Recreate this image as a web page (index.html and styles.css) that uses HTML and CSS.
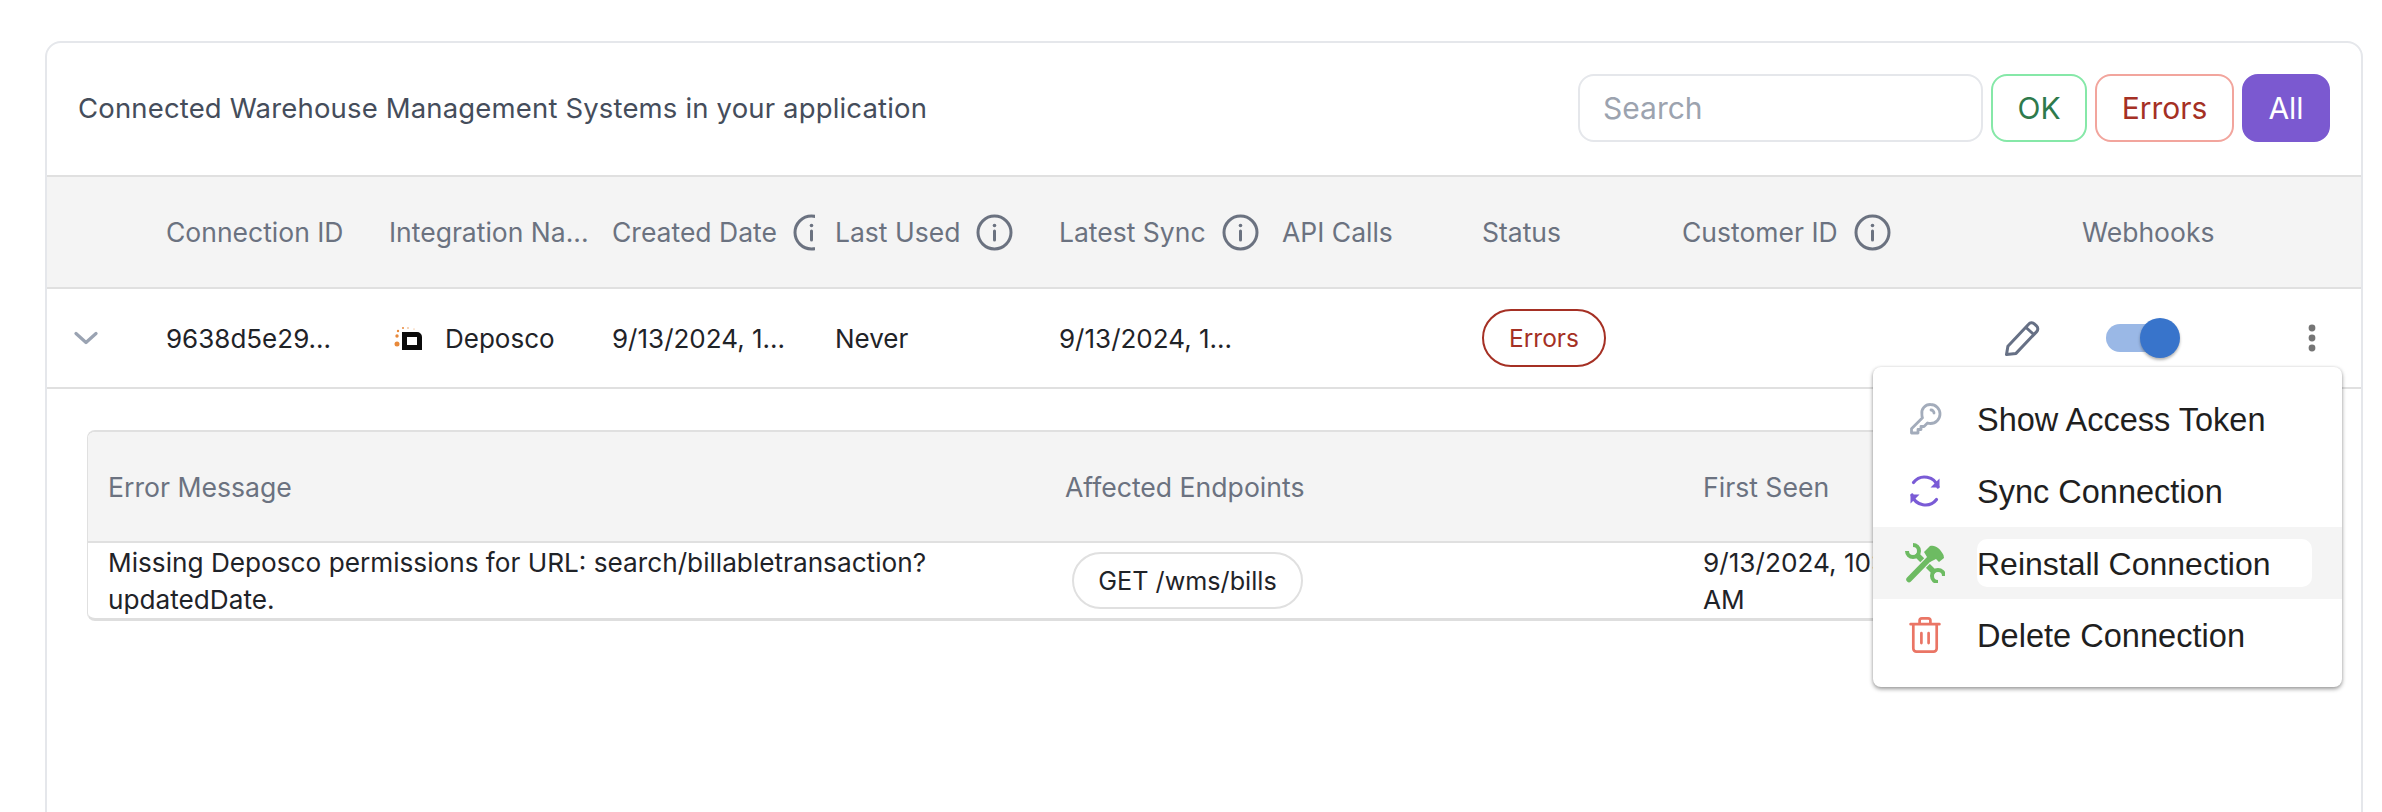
FILE: index.html
```html
<!DOCTYPE html>
<html lang="en">
<head>
<meta charset="utf-8">
<title>Connections</title>
<link rel="stylesheet" href="styles.css">
</head>
<body>
<main class="card">
  <header class="card-head">
    <p class="title">Connected Warehouse Management Systems in your application</p>
    <div class="filters">
      <input class="search" type="text" placeholder="Search">
      <button class="btn btn-ok">OK</button>
      <button class="btn btn-err">Errors</button>
      <button class="btn btn-all">All</button>
    </div>
  </header>

  <div class="grid grid-head">
    <div class="cell"></div>
    <div class="cell"><span class="clip">Connection ID</span></div>
    <div class="cell"><span class="clip">Integration Na...</span></div>
    <div class="cell"><span class="clip">Created Date<svg class="info" viewBox="0 0 37 37"><use href="#i-info"/></svg></span></div>
    <div class="cell"><span class="clip">Last Used<svg class="info" viewBox="0 0 37 37"><use href="#i-info"/></svg></span></div>
    <div class="cell"><span class="clip">Latest Sync<svg class="info" viewBox="0 0 37 37"><use href="#i-info"/></svg></span></div>
    <div class="cell"><span class="clip">API Calls</span></div>
    <div class="cell"><span class="clip">Status</span></div>
    <div class="cell"><span class="clip clip-open">Customer ID<svg class="info" viewBox="0 0 37 37"><use href="#i-info"/></svg></span></div>
    <div class="cell cell-hooks-head">Webhooks</div>
  </div>

  <div class="grid grid-row">
    <div class="cell cell-exp">
      <svg class="chev" viewBox="0 0 24 14"><path d="M2 2.500l10 9 10-9" fill="none" stroke="#9aa3b2" stroke-width="3.200" stroke-linecap="round" stroke-linejoin="round"/></svg>
    </div>
    <div class="cell">9638d5e29...</div>
    <div class="cell">
      <svg class="logo" viewBox="0 0 30 30">
        <g fill="#e8893a"><circle cx="4" cy="21" r="2.500"/><circle cx="4" cy="13" r="1.700"/><circle cx="5" cy="8" r="1.200"/><circle cx="10" cy="5" r="1"/><circle cx="15" cy="5" r=".7"/><circle cx="21" cy="6" r=".5"/></g>
        <path fill-rule="evenodd" d="M9 9h15a5 5 0 0 1 5 5v13H9zM14 14v8h10v-8z" fill="#0b0b0b"/>
      </svg>
      <span class="logo-name">Deposco</span>
    </div>
    <div class="cell">9/13/2024, 1...</div>
    <div class="cell">Never</div>
    <div class="cell">9/13/2024, 1...</div>
    <div class="cell"></div>
    <div class="cell"><span class="status">Errors</span></div>
    <div class="cell"></div>
    <div class="cell cell-hooks">
      <svg class="pencil" viewBox="0 0 36 37"><path d="M2.500 34.500l1.400-8.200L24.600 4.200a4 4 0 0 1 5.700-.3l2.200 2a4 4 0 0 1 .2 5.700L12 33.400zM22 7.500l8 7.200" fill="none" stroke="#667085" stroke-width="3" stroke-linejoin="round"/></svg>
      <span class="toggle"><span class="thumb"></span></span>
      <svg class="dots" viewBox="0 0 8 28"><circle cx="4" cy="4" r="3.400"/><circle cx="4" cy="14" r="3.400"/><circle cx="4" cy="24" r="3.400"/></svg>
    </div>
  </div>

  <section class="detail">
    <div class="sub">
      <div class="sub-grid sub-head">
        <div>Error Message</div>
        <div>Affected Endpoints</div>
        <div>First Seen</div>
      </div>
      <div class="sub-grid sub-row">
        <div class="sub-msg">Missing Deposco permissions for URL: search/billabletransaction?<br>updatedDate.</div>
        <div><span class="pill">GET /wms/bills</span></div>
        <div class="sub-msg">9/13/2024, 10:22:04<br>AM</div>
      </div>
    </div>
  </section>

  <ul class="menu">
    <li class="menu-item">
      <svg class="mi" viewBox="0 0 36 36"><path d="M23.500 3.500a9.500 9.500 0 0 1 0 19c-1 0-2-.2-3-.5l-3.500 3.500h-3v3h-3v3.500H4.500v-4.200l11-11c-.5-1-.6-2.200-.6-3.300a8.500 8.500 0 0 1 8.600-10zM24 9a3 3 0 0 1 3 3" fill="none" stroke="#a3acbb" stroke-width="2.800" stroke-linecap="round" stroke-linejoin="round"/></svg>
      <span class="mt">Show Access Token</span>
    </li>
    <li class="menu-item">
      <svg class="mi" viewBox="0 0 36 36"><path d="M31 14A14 14 0 0 0 6.500 9.500M5 22a14 14 0 0 0 24.500 4.500" fill="none" stroke="#7a5bd6" stroke-width="3.200" stroke-linecap="round"/><path d="M32.500 5.500v9h-9zM3.500 30.500v-9h9z" fill="#7a5bd6"/></svg>
      <span class="mt">Sync Connection</span>
    </li>
    <li class="menu-item is-hover">
      <svg class="mi mi-lg" viewBox="0 0 40 40">
        <path d="M11 11l19 19" stroke="#6dbb62" stroke-width="5.500" fill="none"/>
        <path d="M2 8A6 6 0 1 0 8 2M39 33A6 6 0 1 0 33 39" stroke="#6dbb62" stroke-width="4" fill="none"/>
        <path d="M4 36.500L24 16" stroke="#f4f4f4" stroke-width="8" fill="none"/>
        <path d="M4 36.500L24 16" stroke="#6dbb62" stroke-width="5.500" fill="none" stroke-linecap="round"/>
        <path d="M19 9l6-6c5-1.500 10 2 13.500 9l.5 3-5 4-3-3-6 3z" fill="#6dbb62"/>
      </svg>
      <span class="mt mt-box">Reinstall Connection</span>
    </li>
    <li class="menu-item">
      <svg class="mi" viewBox="0 0 36 40"><path d="M2 8h32M12 8V4a2.500 2.500 0 0 1 2.500-2.500h7A2.500 2.500 0 0 1 24 4v4M5 8v27a3.500 3.500 0 0 0 3.500 3.500h19A3.500 3.500 0 0 0 31 35V8M14 18v11M22 18v11" fill="none" stroke="#ea7565" stroke-width="3" stroke-linecap="round" stroke-linejoin="round"/></svg>
      <span class="mt mt-del">Delete Connection</span>
    </li>
  </ul>
</main>

<svg class="defs" aria-hidden="true">
  <symbol id="i-info" viewBox="0 0 37 37">
    <circle cx="18.500" cy="18.500" r="16.500" fill="none" stroke="#6b7280" stroke-width="3"/>
    <path d="M18.500 17v9" stroke="#6b7280" stroke-width="3" stroke-linecap="round"/>
    <circle cx="18.500" cy="11.500" r="1.800" fill="#6b7280"/>
  </symbol>
</svg>
</body>
</html>
```

FILE: styles.css
```css
* { box-sizing: border-box; }
html, body { margin: 0; padding: 0; height: 812px; overflow: hidden; background: #fff; }
body { padding: 41px 19px 0 45px; font-family: Inter, "Liberation Sans", sans-serif; font-size: 26px; color: #1f2328; }
.defs { width: 0; height: 0; position: absolute; }

.card { position: relative; height: 900px; border: 2px solid #e5e7eb; border-radius: 16px; }
.card-head { height: 134px; display: flex; align-items: center; justify-content: space-between; padding: 0 31px 2px 31px; border-bottom: 2px solid #e0e0e0; }
.title { margin: 0; font-size: 27.5px; font-weight: 400; letter-spacing: .16px; color: #454d5b; }
.filters { display: flex; gap: 8px; }
.search { width: 405px; height: 68px; padding: 0 23px; border: 2px solid #e5e7eb; border-radius: 16px; font: 30px Inter, sans-serif; background: #fff; outline: none; }
.search::placeholder { color: #9ca3af; }
.btn { height: 68px; padding: 0 23px; border: 2px solid; border-radius: 16px; background: #fff; font: 30px Inter, sans-serif; }
.btn-ok { width: 96px; padding: 0; border-color: #86e8a8; color: #2e7a4c; }
.btn-err { width: 139px; padding: 0; border-color: #f2a59d; color: #a53024; }
.btn-all { width: 88px; padding: 0; border-color: #7b59d0; background: #7b59d0; color: #fff; }

.grid { display: grid; grid-template-columns: 119px repeat(3, 223px) 224px 223px repeat(3, 200px) 1fr; align-items: center; border-bottom: 2px solid #e0e0e0; }
.grid-head { height: 112px; background: #f4f4f4; color: #6b7280; font-size: 26.5px; font-weight: 400; }
.grid-row { height: 100px; }
.cell { display: flex; align-items: center; min-width: 0; white-space: nowrap; }
.clip { display: flex; align-items: center; gap: 16px; width: calc(100% - 20px); overflow: hidden; flex: none; }
.clip-open { width: 100%; overflow: visible; }
.info { width: 37px; height: 37px; flex: none; }
.cell-hooks-head { padding-left: 200px; }
.cell-exp { padding-left: 27px; }
.chev { width: 24px; height: 14px; }
.logo { width: 30px; height: 30px; margin: 0 22px 0 4px; flex: none; }
.status { display: flex; align-items: center; justify-content: center; width: 124px; height: 58px; border: 2px solid #a53024; border-radius: 29px; color: #a53024; font-size: 24.5px; }
.cell-hooks { padding: 0 45px 0 122px; }
.pencil { width: 36px; height: 37px; flex: none; }
.toggle { position: relative; width: 68px; height: 28px; margin-left: 66px; border-radius: 14px; background: #9ab8e6; flex: none; }
.thumb { position: absolute; top: -6px; right: -6px; width: 40px; height: 40px; border-radius: 50%; background: #3874cb; box-shadow: 0 2px 3px rgba(0,0,0,.3); }
.dots { width: 8px; height: 28px; margin-left: auto; fill: #757575; flex: none; }

.detail { padding: 41px 0 0 40px; }
.sub { width: 2240px; border-top: 2px solid #e0e0e0; border-left: 1px solid #e0e0e0; border-bottom: 3px solid #dedede; border-radius: 8px; overflow: hidden; }
.sub-grid { display: grid; grid-template-columns: 957px 638px 1fr; padding-left: 20px; }
.sub-head { height: 111px; align-items: center; background: #f4f4f4; border-bottom: 2px solid #e0e0e0; color: #6b7280; font-size: 26.6px; }
.sub-row { height: 75px; }
.sub-msg { line-height: 37px; padding-top: 1px; font-size: 26.2px; }
.pill { display: inline-flex; align-items: center; justify-content: center; width: 231px; height: 57px; margin: 9px 0 0 7px; border: 2px solid #e0e0e0; border-radius: 29px; font-size: 25.2px; }

.menu { position: absolute; left: 1826px; top: 324px; width: 469px; margin: 0; padding: 16px 0; list-style: none; background: #fff; border-radius: 8px; box-shadow: 0 2px 4px rgba(0,0,0,.4), 0 0 3px rgba(0,0,0,.08); font-family: "Liberation Sans", Arial, sans-serif; font-size: 32.5px; color: #1f1f1f; }
.menu-item { display: flex; align-items: center; height: 72px; }
.menu-item.is-hover { background: #f4f4f4; }
.mi { width: 36px; height: 36px; margin: 0 34px 0 34px; flex: none; }
.mi-lg { width: 40px; height: 40px; margin: 0 32px; }
.mt { display: block; padding-top: 2px; }
.mt-box { width: 335px; height: 48px; padding-top: 0; line-height: 50px; background: #fff; border-radius: 10px; font-size: 32px; }
.mt-del { font-size: 32.6px; }
```
